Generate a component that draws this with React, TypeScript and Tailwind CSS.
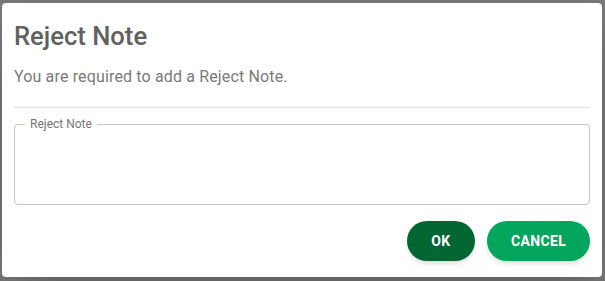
export default function App() {
  return (
    <div className="h-screen w-screen overflow-hidden bg-[#787878] pl-[2px] pt-[3px] font-['Roboto',sans-serif]">
      <div className="flex h-[274px] w-[600px] flex-col rounded-[4px] bg-white px-3 pt-[17px] shadow-2xl">
        <h2 className="text-[25.6px] font-medium leading-[32px] text-[#616161]">Reject Note</h2>
        <p className="mt-[13px] text-[16px] leading-[24px] tracking-[0.15px] text-[#7a7a7a]">
          You are required to add a Reject Note.
        </p>
        <hr className="mt-[18px] border-0 border-t border-[#e0e0e0]" />
        <div className="relative mt-4 h-[81px] rounded-[4px] border border-[#c4c4c4]">
          <span className="absolute -top-[9px] left-[10px] bg-white px-[5px] text-[12px] leading-[16px] text-[#757575]">
            Reject Note
          </span>
        </div>
        <div className="mt-4 flex justify-end gap-3">
          <button className="h-10 w-[68px] rounded-full bg-[#046633] text-[14px] font-bold tracking-wide text-white shadow-md">
            OK
          </button>
          <button className="h-10 w-[103px] rounded-full bg-[#03a65c] text-[14px] font-bold tracking-wide text-white shadow-md">
            CANCEL
          </button>
        </div>
      </div>
    </div>
  );
}
